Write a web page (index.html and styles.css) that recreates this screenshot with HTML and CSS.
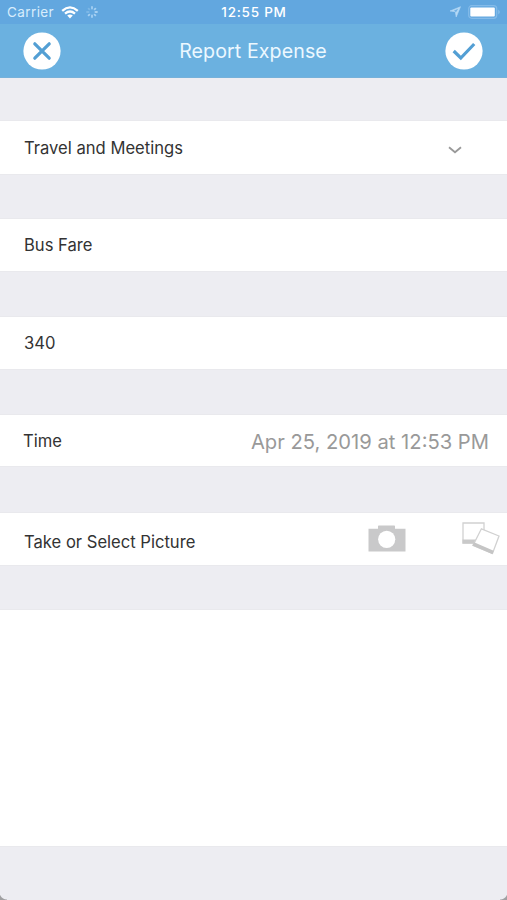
FILE: index.html
```html
<!DOCTYPE html>
<html lang="en">
<head>
<meta charset="utf-8">
<title>Report Expense</title>
<link rel="stylesheet" href="styles.css">
</head>
<body>
<div class="screen">
  <div class="status">
    <div class="status-left">
      <span class="carrier">Carrier</span>
      <svg class="wifi" width="18" height="13" viewBox="0 0 18 13" fill="none" stroke="#fff" stroke-width="2.3"><path d="M1.2 4.8Q9-2 16.8 4.8M4 7.7Q9 3.4 14 7.7"/><path d="M6.2 9.6Q9 7.3 11.8 9.6L9 12.4Z" fill="#fff" stroke="none"/></svg>
      <svg class="spinner" width="12" height="12" viewBox="0 0 12 12" stroke="#a5d0f2" stroke-width="1.8" stroke-linecap="round"><path d="M6 1V2.6M9.4 2.6 8.6 3.4M11 6H9.4M9.4 9.4 8.6 8.6M6 11V9.4M2.6 9.4 3.4 8.6" /><path d="M1 6H2.6M2.6 2.6 3.4 3.4" opacity=".4"/></svg>
    </div>
    <span class="clock">12:55 PM</span>
    <div class="status-right">
      <svg width="12" height="12" viewBox="0 0 12 12"><path d="M11.5.7 7.2 11 6.3 5.7 1 5Z" fill="#b5d9f5" stroke="#b5d9f5" stroke-width=".6"/><path d="M9.2 2.7 5 4.6 7 6.2Z" fill="#72b1e4"/></svg>
      <svg width="33" height="14" viewBox="0 0 33 14"><rect x=".7" y=".7" width="28" height="12.6" rx="3" fill="#62a7df" stroke="#84bbe9" stroke-width="1.2"/><rect x="2.3" y="2.5" width="24.5" height="9" rx="1" fill="#fff"/><path d="M30.3 4.5q2.8 2.5 0 5z" fill="#8dc1eb"/></svg>
    </div>
  </div>
  <header class="nav">
    <button class="round" aria-label="Cancel"><svg width="38" height="38" viewBox="0 0 38 38"><circle cx="19" cy="19" r="18.6" fill="#fff"/><path d="M11.8 11.8 26.2 26.2M26.2 11.8 11.8 26.2" stroke="#539fd4" stroke-width="3.2" stroke-linecap="round"/></svg></button>
    <h1>Report Expense</h1>
    <button class="round" aria-label="Save"><svg width="38" height="38" viewBox="0 0 38 38"><circle cx="19" cy="19" r="18.6" fill="#fff"/><path d="M8.7 19 15.8 26 29.2 12" fill="none" stroke="#539fd4" stroke-width="3.2"/></svg></button>
  </header>
  <main class="form">
    <div class="row category"><span>Travel and Meetings</span><svg width="14" height="8" viewBox="0 0 14 8"><path d="M1 1.2 7 6.3 13 1.2" fill="none" stroke="#999" stroke-width="1.8"/></svg></div>
    <div class="row name"><span>Bus Fare</span></div>
    <div class="row amount"><span>340</span></div>
    <div class="row time"><span>Time</span><span class="date">Apr 25, 2019 at 12:53 PM</span></div>
    <div class="row picture"><span>Take or Select Picture</span>
      <div class="tools">
        <svg width="38" height="27" viewBox="0 0 38 27"><path d="M.5 3.7H10V1.2q0-.7.7-.7H26.3q.7 0 .7.7V3.7H37.5V26.5H.5Z" fill="#c9c9ca"/><circle cx="18.7" cy="14.3" r="8.6" fill="#fff"/></svg>
        <svg width="38" height="33" viewBox="0 0 38 33"><path d="M1 1H22V21H1Z" fill="#fff" stroke="#d1d1d1" stroke-width="1.3"/><path d="M.5 17.5H22V21.6H.5Z" fill="#c9c9c9"/><path d="M19.4 6.8 37 14 30.5 31.5 11 23.4Z" fill="#fff" stroke="#d1d1d1" stroke-width="1.3"/><path d="M12 20.2 31.7 28.7 30.5 32.2 10.5 23.6Z" fill="#c5c5c5"/></svg>
      </div>
    </div>
    <div class="preview"></div>
  </main>
  <footer class="bottom"><i></i><i></i></footer>
</div>
</body>
</html>
```
FILE: styles.css
```css
* { box-sizing: border-box; }
body { margin: 0; background: #ededf2; font-family: Inter, "Liberation Sans", sans-serif; color: #333; }
.screen { width: 507px; height: 900px; display: flex; flex-direction: column; overflow: hidden; }
.status { height: 24px; background: #62a7df; color: #fff; display: grid; grid-template-columns: 1fr auto 1fr; align-items: center; padding: 0 6px 0 7px; flex: none; }
.status-left, .status-right { display: flex; align-items: center; }
.status-right { justify-content: flex-end; gap: 7px; }
.carrier { font-size: 13.5px; letter-spacing: .4px; color: #d8edfc; }
.wifi { margin-left: 7px; }
.spinner { margin-left: 7px; }
.clock { font-size: 13.5px; font-weight: 500; letter-spacing: .75px; }
.nav { height: 54px; background: #6bb1e0; border-bottom: 1px solid #76b1da; display: flex; align-items: center; justify-content: space-between; padding: 0 24px 0 23px; flex: none; }
.round { display: flex; padding: 0; border: 0; background: none; }
h1 { margin: 0; padding-top: 1px; font-size: 19.6px; font-weight: 400; letter-spacing: .1px; color: #ecf8ff; }
.form { display: flex; flex-direction: column; flex: none; padding-top: 43px; }
.row { height: 52px; margin-bottom: 46px; background: #fff; display: flex; align-items: center; justify-content: space-between; padding-left: 24px; font-size: 16.6px; white-space: nowrap; box-shadow: 0 0 0 1px #e9e9ed; }
.category { height: 53px; margin-bottom: 45px; padding-right: 45px; }
.category svg { margin-top: 4px; }
.time { height: 51px; margin-bottom: 47px; padding: 1px 18px 0 23px; }
.date { font-size: 20.2px; color: #999; }
.picture { margin-bottom: 45px; padding-right: 7px; }
.picture > span { padding-top: 6px; }
.tools { display: flex; align-items: center; gap: 56px; margin-top: -2px; }
.preview { height: 236px; background: #fff; box-shadow: 0 0 0 1px #e9e9ed; }
.bottom { flex: 1; display: flex; align-items: flex-end; justify-content: space-between; }
.bottom i { width: 7px; height: 5px; background: radial-gradient(circle at 100% -3px, transparent 7px, #a0a0a2 8px); }
.bottom i:last-child { background: radial-gradient(circle at 0 -3px, transparent 7px, #a0a0a2 8px); }
```
